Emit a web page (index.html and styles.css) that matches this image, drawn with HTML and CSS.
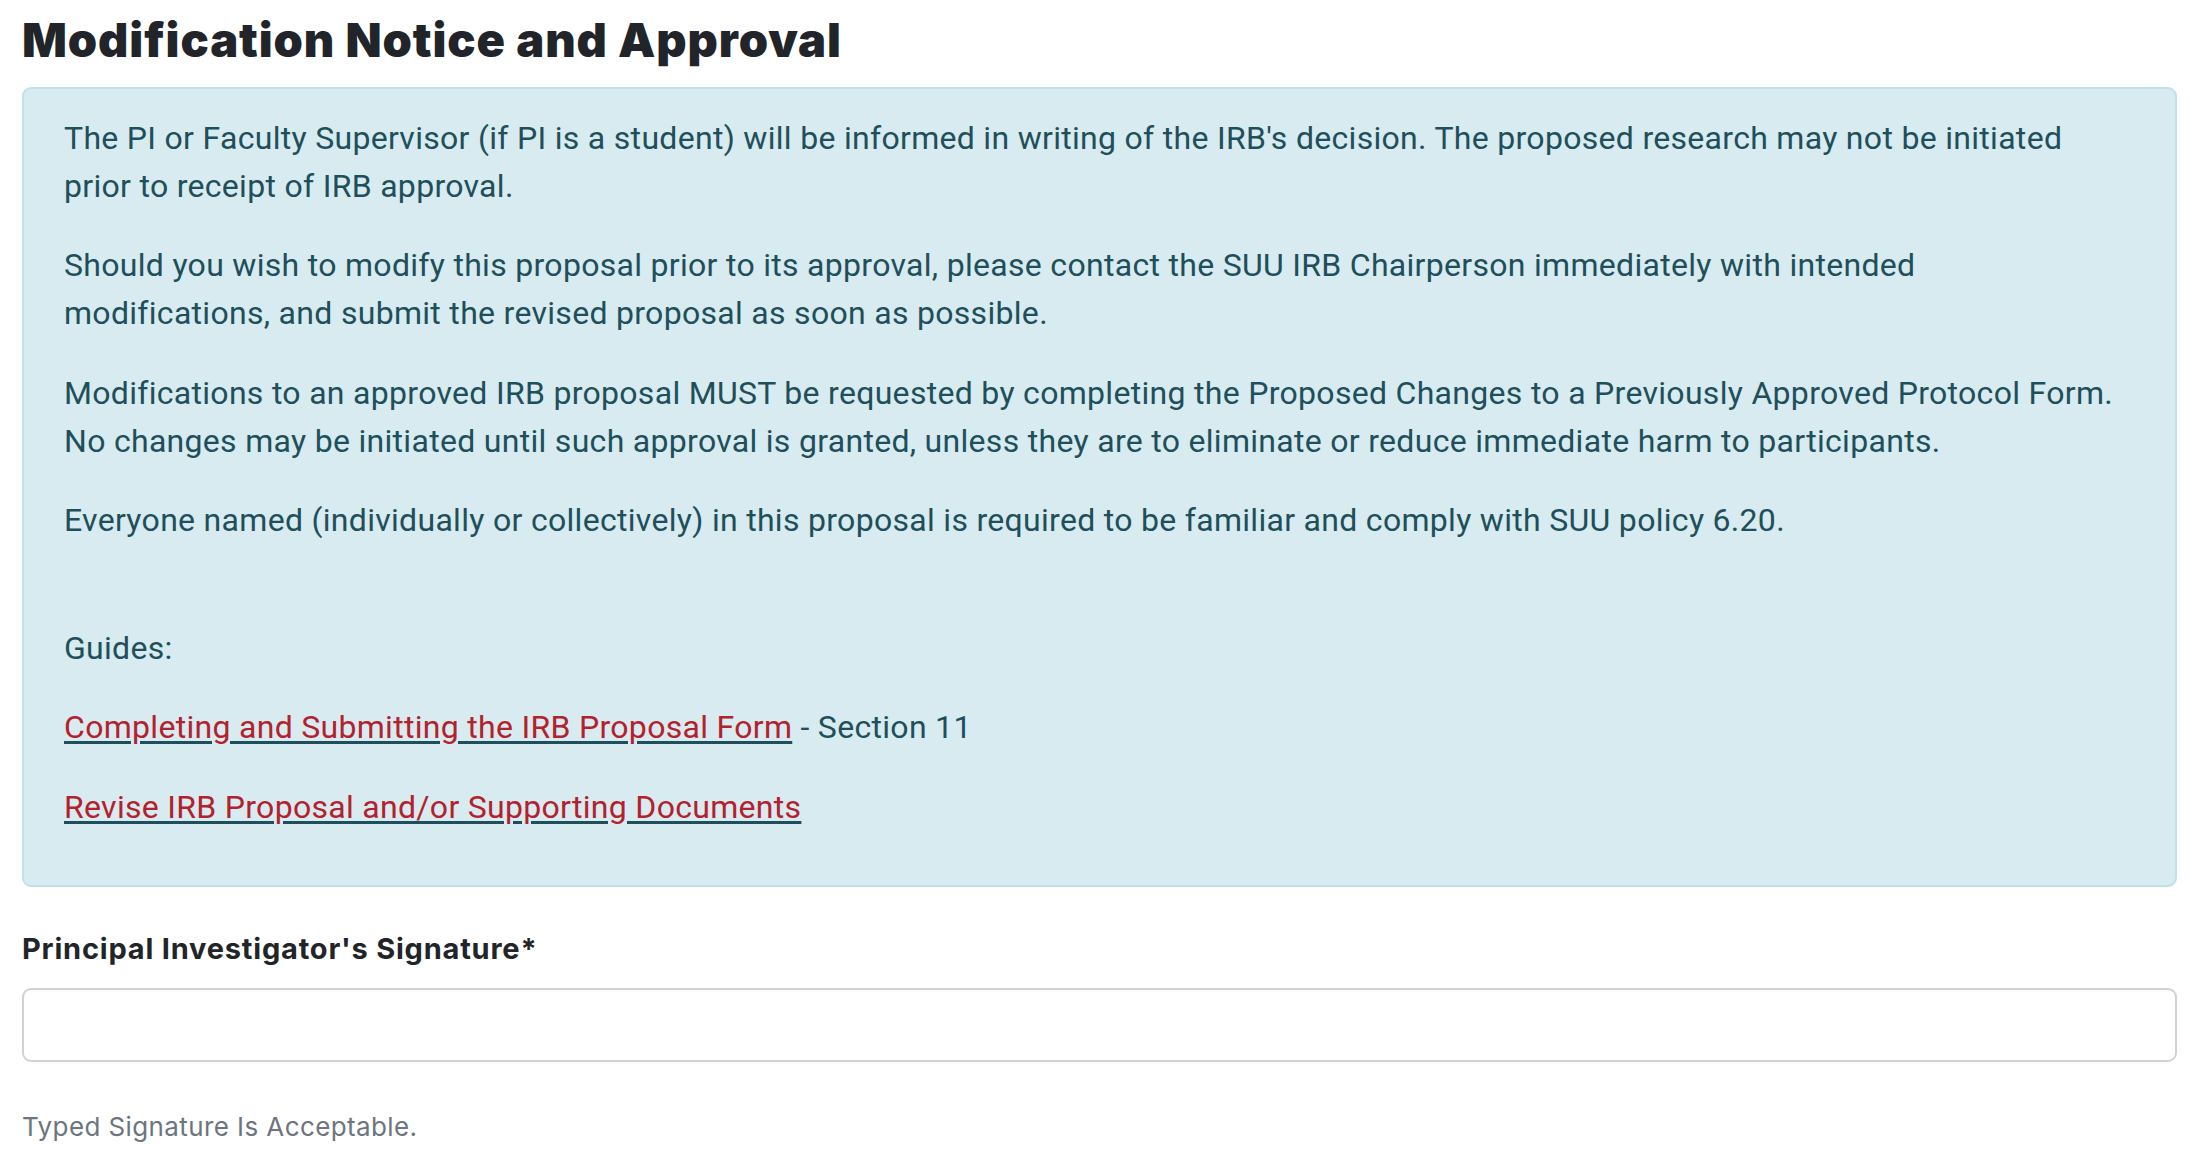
FILE: index.html
```html
<!DOCTYPE html>
<html lang="en">
<head>
<meta charset="utf-8">
<title>Modification Notice and Approval</title>
<link rel="stylesheet" href="styles.css">
</head>
<body>
<main class="page">
  <h2 class="section-title">Modification Notice and Approval</h2>
  <div class="alert-info">
    <p>The PI or Faculty Supervisor (if PI is a student) will be informed in writing of the IRB's decision. The proposed research may not be initiated prior to receipt of IRB approval.</p>
    <p>Should you wish to modify this proposal prior to its approval, please contact the SUU IRB Chairperson immediately with intended modifications, and submit the revised proposal as soon as possible.</p>
    <p>Modifications to an approved IRB proposal MUST be requested by completing the Proposed Changes to a Previously Approved Protocol Form. No changes may be initiated until such approval is granted, unless they are to eliminate or reduce immediate harm to participants.</p>
    <p>Everyone named (individually or collectively) in this proposal is required to be familiar and comply with SUU policy 6.20.<br>&nbsp;</p>
    <p>Guides:</p>
    <p><a href="#">Completing and Submitting the IRB Proposal Form</a> - Section 11</p>
    <p><a href="#">Revise IRB Proposal and/or Supporting Documents</a></p>
  </div>
  <div class="field">
    <label class="field-label" for="sig">Principal Investigator's Signature*</label>
    <input class="field-input" id="sig" type="text">
    <div class="field-help">Typed Signature Is Acceptable.</div>
  </div>
</main>
</body>
</html>
```

FILE: styles.css
```css
html, body {
  margin: 0;
  padding: 0;
  background: #ffffff;
}

.page {
  padding: 0 21px 0 22px;
  font-family: "Roboto", "Liberation Sans", sans-serif;
}

.section-title {
  margin: 0;
  padding-top: 11px;
  font-family: "Inter", "Roboto", sans-serif;
  font-weight: 900;
  font-size: 47px;
  line-height: 58px;
  color: #212529;
  letter-spacing: 0.9px;
}

.alert-info {
  margin-top: 18px;
  background: #d7ebf0;
  border: 2px solid #c0e1e9;
  border-radius: 9px;
  padding: 26px 52px 21px 40px;
  color: #1e4f5a;
  font-size: 32px;
  line-height: 47.7px;
  letter-spacing: 0.3px;
}

.alert-info p {
  margin: 0 0 32px 0;
}

.alert-info a {
  color: #b3212d;
  text-decoration: underline;
  text-decoration-color: #1e4f5a;
  text-decoration-thickness: 3px;
  text-underline-offset: 3px;
}

.field {
  margin-top: 39px;
}

.field-label {
  display: block;
  font-family: "Inter", "Roboto", sans-serif;
  font-weight: 700;
  font-size: 29px;
  line-height: 46px;
  color: #212529;
  letter-spacing: 0.8px;
}

.field-input {
  display: block;
  box-sizing: border-box;
  width: 100%;
  height: 74px;
  margin-top: 16px;
  border: 2px solid #ced3d8;
  border-radius: 9px;
  background: #fff;
  font-size: 28px;
}

.field-help {
  margin-top: 47px;
  font-family: "Inter", "Roboto", sans-serif;
  font-size: 26px;
  line-height: 36px;
  color: #6c757d;
  letter-spacing: 0.4px;
}
```
